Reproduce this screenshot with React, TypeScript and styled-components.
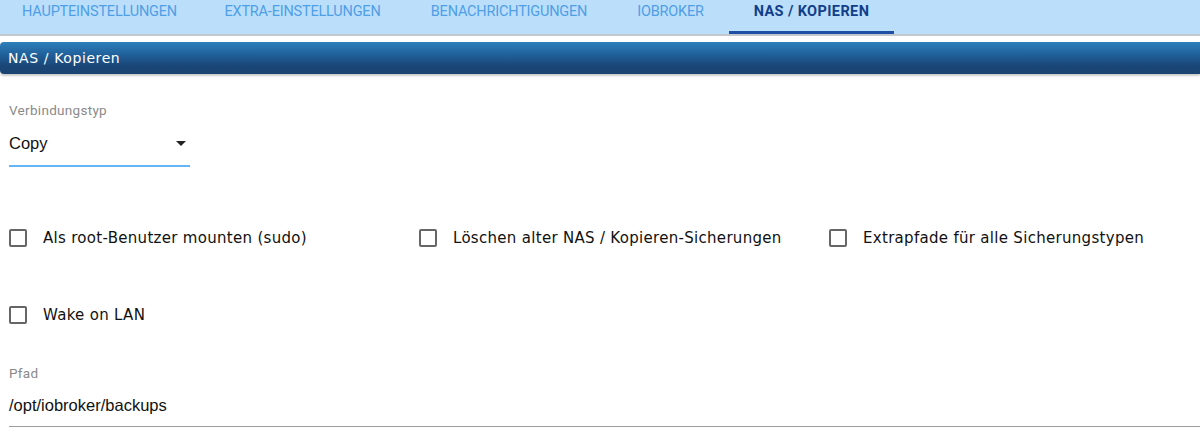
import styled, { createGlobalStyle } from "styled-components";

const GlobalStyle = createGlobalStyle`
  html, body {
    margin: 0;
    padding: 0;
    background: #ffffff;
  }
  body {
    font-family: "Liberation Sans", Arial, sans-serif;
    width: 1200px;
    height: 446px;
    overflow: hidden;
  }
`;

// tab widths follow the reference layout
const tabs = [
  { label: "HAUPTEINSTELLUNGEN", width: 199 },
  { label: "EXTRA-EINSTELLUNGEN", width: 207 },
  { label: "BENACHRICHTIGUNGEN", width: 206 },
  { label: "IOBROKER", width: 117 },
  { label: "NAS / KOPIEREN", width: 165 },
];

const checks = [
  ["Als root-Benutzer mounten (sudo)", "Löschen alter NAS / Kopieren-Sicherungen", "Extrapfade für alle Sicherungstypen"],
  ["Wake on LAN"],
];

export default function App() {
  return (
    <>
      <GlobalStyle />
      <Page>
        <TabBar>
          {tabs.map((t, i) => (
            <Tab key={t.label} $width={t.width} $active={i === tabs.length - 1}>
              {t.label}
            </Tab>
          ))}
        </TabBar>

        <SectionHeader>NAS / Kopieren</SectionHeader>

        <Form>
          <SelectField>
            <FieldLabel>Verbindungstyp</FieldLabel>
            <SelectBox>
              <FieldValue>Copy</FieldValue>
              <Caret />
            </SelectBox>
          </SelectField>

          {checks.map((row, r) => (
            <CheckRow key={r}>
              {row.map((label) => (
                <CheckItem key={label}>
                  <Box />
                  <CheckLabel>{label}</CheckLabel>
                </CheckItem>
              ))}
            </CheckRow>
          ))}

          <TextField>
            <FieldLabel>Pfad</FieldLabel>
            <FieldValue>/opt/iobroker/backups</FieldValue>
          </TextField>
        </Form>
      </Page>
    </>
  );
}

const Page = styled.div`
  display: flex;
  flex-direction: column;
  width: 1200px;
`;

const TabBar = styled.div`
  display: flex;
  height: 34px;
  background: #bbdefb;
  border-bottom: 2px solid #c2c8ce;
`;

const Tab = styled.div<{ $active?: boolean; $width: number }>`
  display: flex;
  align-items: center;
  justify-content: center;
  flex: 0 0 ${(p) => p.$width}px;
  height: 100%;
  box-sizing: border-box;
  padding-bottom: 8px;
  font-family: Roboto, "Liberation Sans", sans-serif;
  font-size: 14.5px;
  letter-spacing: ${(p) => (p.$active ? "0.4px" : "-0.2px")};
  white-space: nowrap;
  color: ${(p) => (p.$active ? "#133f8a" : "#4f9fe6")};
  font-weight: ${(p) => (p.$active ? 700 : 400)};
  border-bottom: 3px solid ${(p) => (p.$active ? "#1e4fa5" : "transparent")};
`;

const SectionHeader = styled.div`
  margin-top: 6px;
  height: 32px;
  display: flex;
  align-items: center;
  padding-left: 8px;
  border-radius: 4px 0 0 4px;
  background: linear-gradient(to bottom, #2d80bb 0%, #20609a 40%, #1a4677 75%, #194373 100%);
  box-shadow: 0 2px 2px rgba(0, 0, 0, 0.2);
  color: #ffffff;
  font-family: "DejaVu Sans", Verdana, sans-serif;
  font-size: 14px;
  letter-spacing: 0.6px;
`;

const Form = styled.div`
  display: flex;
  flex-direction: column;
  padding: 28px 0 0 9px;
`;

const FieldLabel = styled.div`
  font-family: Roboto, "Liberation Sans", sans-serif;
  font-size: 13.5px;
  letter-spacing: 0.3px;
  color: #8a8a8a;
  line-height: 16px;
`;

const FieldValue = styled.div`
  font-family: "Liberation Sans", Arial, sans-serif;
  font-size: 16.5px;
  color: #111111;
  line-height: 20px;
`;

const SelectField = styled.div`
  display: flex;
  flex-direction: column;
  width: 181px;
  gap: 15px;
`;

const SelectBox = styled.div`
  display: flex;
  align-items: center;
  justify-content: space-between;
  padding-bottom: 12px;
  border-bottom: 2px solid #64b5f6;
`;

const Caret = styled.div`
  width: 0;
  height: 0;
  margin-right: 4px;
  border-left: 5px solid transparent;
  border-right: 5px solid transparent;
  border-top: 5px solid #222222;
`;

const CheckRow = styled.div`
  display: grid;
  grid-template-columns: repeat(3, 410px);
  margin-top: 61px;
  & + & {
    margin-top: 57px;
  }
`;

const CheckItem = styled.div`
  display: flex;
  align-items: center;
  gap: 16px;
  height: 20px;
`;

const Box = styled.div`
  width: 18px;
  height: 18px;
  box-sizing: border-box;
  border: 2px solid #666666;
  border-radius: 2px;
  flex-shrink: 0;
`;

const CheckLabel = styled.div`
  font-family: "DejaVu Sans", Verdana, sans-serif;
  font-size: 15px;
  letter-spacing: 0.3px;
  white-space: nowrap;
  color: #111111;
`;

const TextField = styled.div`
  display: flex;
  flex-direction: column;
  gap: 14px;
  margin-top: 40px;
  padding-bottom: 11px;
  border-bottom: 1px solid #9e9e9e;
`;
